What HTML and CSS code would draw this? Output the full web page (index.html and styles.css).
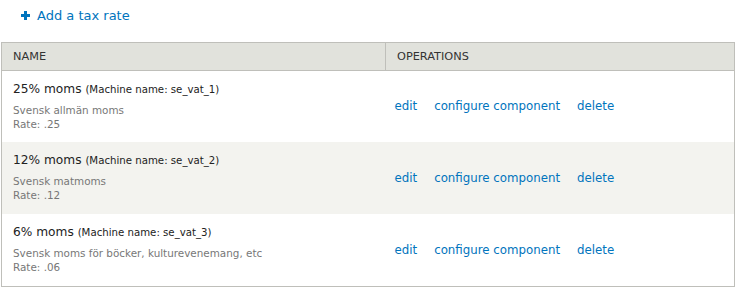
FILE: index.html
```html
<!DOCTYPE html>
<html lang="en">
<head>
    <meta charset="UTF-8">
    <title>Tax rates</title>
    <link rel="stylesheet" href="styles.css">
</head>
<body>
    <ul class="action-links">
        <li><a href="#" class="add-link"><span class="plus"></span>Add a tax rate</a></li>
    </ul>

    <table class="rates">
        <thead>
            <tr>
                <th class="col-name">NAME</th>
                <th class="col-ops">OPERATIONS</th>
            </tr>
        </thead>
        <tbody>
            <tr>
                <td>
                    <div class="rate-title">25% moms <small>(Machine name: se_vat_1)</small></div>
                    <div class="rate-desc">Svensk allmän moms</div>
                    <div class="rate-desc">Rate: .25</div>
                </td>
                <td class="ops">
                    <a href="#">edit</a><a href="#">configure component</a><a href="#">delete</a>
                </td>
            </tr>
            <tr class="even">
                <td>
                    <div class="rate-title">12% moms <small>(Machine name: se_vat_2)</small></div>
                    <div class="rate-desc">Svensk matmoms</div>
                    <div class="rate-desc">Rate: .12</div>
                </td>
                <td class="ops">
                    <a href="#">edit</a><a href="#">configure component</a><a href="#">delete</a>
                </td>
            </tr>
            <tr>
                <td>
                    <div class="rate-title">6% moms <small>(Machine name: se_vat_3)</small></div>
                    <div class="rate-desc">Svensk moms för böcker, kulturevenemang, etc</div>
                    <div class="rate-desc">Rate: .06</div>
                </td>
                <td class="ops">
                    <a href="#">edit</a><a href="#">configure component</a><a href="#">delete</a>
                </td>
            </tr>
        </tbody>
    </table>
</body>
</html>
```

FILE: styles.css
```css
* {
    margin: 0;
    padding: 0;
    box-sizing: border-box;
}

body {
    font-family: "DejaVu Sans", Verdana, sans-serif;
    color: #333;
    background: #fff;
    padding: 5px 8px 0 1px;
}

a {
    color: #0074bd;
    text-decoration: none;
}

.action-links {
    list-style: none;
    padding: 0 0 0 20px;
    margin-bottom: 17px;
}

.add-link {
    font-size: 13px;
    line-height: 18px;
    display: inline-flex;
    align-items: center;
}

.plus {
    position: relative;
    width: 9px;
    height: 9px;
    margin-right: 7px;
}

.plus::before,
.plus::after {
    content: "";
    position: absolute;
    background: #0074bd;
}

.plus::before {
    left: 3px;
    top: 0;
    width: 3px;
    height: 9px;
}

.plus::after {
    left: 0;
    top: 3px;
    width: 9px;
    height: 3px;
}

.rates {
    width: 734px;
    border-collapse: collapse;
    border: 1px solid #bfbfba;
}

.rates th {
    background: #e1e2dc;
    border: 1px solid #bfbfba;
    font-weight: normal;
    text-align: left;
    font-size: 11.3px;
    color: #333;
    padding: 0 11px;
    height: 28px;
}

.col-name {
    width: 384px;
}

.rates td {
    padding: 11px 11px 6px;
    height: 72px;
    vertical-align: top;
}

.rates tr.even td {
    background: #f3f3ef;
}

.rate-title {
    font-size: 12.2px;
    color: #222;
    margin-bottom: 7px;
}

.rate-title small {
    font-size: 10.2px;
}

.rate-desc {
    font-size: 10.4px;
    line-height: 14px;
    color: #777;
}

.rates td.ops {
    vertical-align: middle;
    font-size: 11.8px;
    padding: 0 11px 0 9px;
}

.ops a {
    margin-right: 17px;
}
```
